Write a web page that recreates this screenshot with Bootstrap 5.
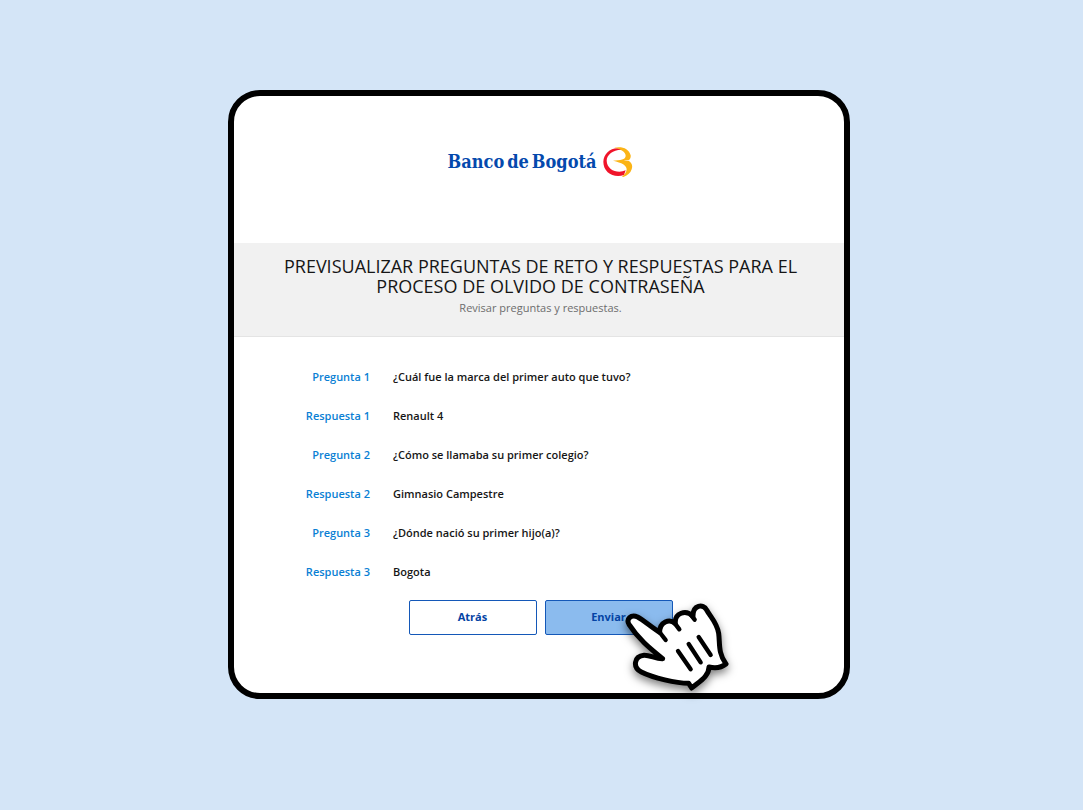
<!DOCTYPE html>
<html lang="es">
<head>
<meta charset="utf-8">
<meta name="viewport" content="width=device-width, initial-scale=1">
<title>Banco de Bogotá</title>
<link href="https://cdn.jsdelivr.net/npm/bootstrap@5.3.0/dist/css/bootstrap.min.css" rel="stylesheet">
<style>
  body { background: #d4e5f7; font-family: "Open Sans", "Noto Sans", sans-serif; font-size: 11px; line-height: 15px; color: #161616; }
  .stage { padding: 90px 5px 90px 0; }
  .panel { width: 100%; max-width: 622px; border: 6px solid #000; border-radius: 32px; padding-bottom: 58px; }
  .brand { height: 147px; padding: 0 0 16px 3px; gap: 7px; }
  .brand-name { gap: 3px; font-family: "DejaVu Serif Condensed", "DejaVu Serif", serif; font-weight: 700; font-size: 18px; line-height: 26px; color: #0449ad; }
  .banner { background: #f1f1f1; border-bottom: 1px solid #e4e4e4; padding: 13px 40px 21px 43px; color: #6d6d6d; }
  .banner h1 { margin-bottom: 4px; font-size: 18px; line-height: 20px; font-weight: 400; color: #161616; }
  .answers { margin-top: 32px; font-weight: 600; }
  .answers th, .answers td { font-weight: 600; padding: 0 0 24px; }
  .answers th { width: 136px; color: #0a7fd4; }
  .answers td { padding-left: 23px; }
  .actions { padding-left: 3px; margin-top: -3px; }
  .choice { width: 128px; height: 35px; padding: 0; border: 1px solid #1458b8; border-radius: 2px; font-size: 11px; font-weight: 700; color: #0443a4; background: #fff; }
  .choice-send, .choice-send:hover { background: #8bbbee; color: #0443a4; border-color: #1458b8; }
  .pointer { left: 45px; top: -10px; pointer-events: none; overflow: visible; filter: drop-shadow(0 4px 4px rgba(0,0,0,.5)); }
</style>
</head>
<body>
<main class="stage d-flex justify-content-center">
  <section class="panel bg-white">
    <header class="brand d-flex justify-content-center align-items-center">
      <div class="brand-name d-flex"><span>Banco</span> <span>de</span> <span>Bogotá</span></div>
      <svg width="30" height="30" viewBox="518 50 90 90" aria-hidden="true">
        <path fill="#f0142a" d="M586 60C552 42 520 64 519 94C519 126 549 144 581 134L586 120C562 131 530 119 529 91C529 70 557 52 586 60Z"/>
        <path fill="#fbb416" d="M552 52C574 47 596 54 601 75C602 82 599 87 594 91C604 96 608 106 604 117C600 130 588 139 574 141C582 133 589 126 589 117C589 105 575 97 548 91C570 89 586 88 586 76C586 64 570 55 552 52Z"/>
        <path fill="#fff" d="M607 86C599 90 590 91 580 91C590 93 599 93 607 89Z"/>
      </svg>
    </header>
    <div class="banner text-center">
      <h1>PREVISUALIZAR PREGUNTAS DE RETO Y RESPUESTAS PARA EL PROCESO DE OLVIDO DE CONTRASEÑA</h1>
      <p class="mb-0">Revisar preguntas y respuestas.</p>
    </div>
    <table class="answers w-100">
      <tbody>
        <tr><th scope="row" class="text-end">Pregunta 1</th><td>¿Cuál fue la marca del primer auto que tuvo?</td></tr>
        <tr><th scope="row" class="text-end">Respuesta 1</th><td>Renault 4</td></tr>
        <tr><th scope="row" class="text-end">Pregunta 2</th><td>¿Cómo se llamaba su primer colegio?</td></tr>
        <tr><th scope="row" class="text-end">Respuesta 2</th><td>Gimnasio Campestre</td></tr>
        <tr><th scope="row" class="text-end">Pregunta 3</th><td>¿Dónde nació su primer hijo(a)?</td></tr>
        <tr><th scope="row" class="text-end">Respuesta 3</th><td>Bogota</td></tr>
      </tbody>
    </table>
    <div class="actions d-flex justify-content-center gap-2">
      <button type="button" class="btn choice">Atrás</button>
      <div class="position-relative">
        <button type="button" class="btn choice choice-send">Enviar</button>
        <svg class="pointer position-absolute" width="160" height="120" viewBox="0 0 480 360" aria-hidden="true" fill="none" stroke="#000" stroke-width="15" stroke-linecap="round" stroke-linejoin="round">
          <path fill="#fff" d="M117 103C108 88 122 72 143 81C158 89 185 112 209 127C209 96 238 84 256 101C253 68 288 58 309 79C308 44 340 40 350 60C362 82 381 98 386 130C390 160 384 190 408 222C398 230 380 236 357 231C357 260 325 276 305 294L296 280C258 280 190 264 154 246C127 232 132 199 162 196C180 195 198 207 218 206C180 175 145 147 117 103Z"/>
          <path stroke-width="13" d="M206 123L227 150M253 98L268 118M304 76L314 89M264 183L302 238M296 162L332 217M326 141L362 195"/>
        </svg>
      </div>
    </div>
  </section>
</main>
<script src="https://cdn.jsdelivr.net/npm/bootstrap@5.3.0/dist/js/bootstrap.bundle.min.js"></script>
</body>
</html>
